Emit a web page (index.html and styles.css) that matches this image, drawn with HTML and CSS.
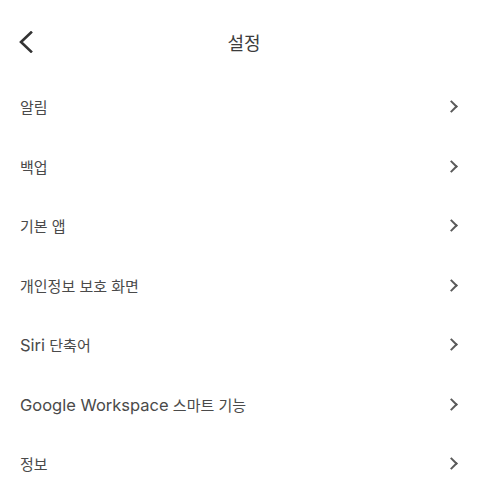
FILE: index.html
```html
<!DOCTYPE html>
<html lang="ko">
<head>
    <meta charset="UTF-8">
    <meta name="viewport" content="width=device-width, initial-scale=1.0">
    <title>설정</title>
    <link rel="stylesheet" href="styles.css">
</head>
<body>
    <div class="header">
        <button class="back" aria-label="뒤로">
            <svg width="16" height="22" viewBox="0 0 16 22">
                <path d="M13 1.5 L3 11 L13 20.5" fill="none" stroke="#333" stroke-width="2.6" stroke-linecap="square"/>
            </svg>
        </button>
        <h1>설정</h1>
    </div>
    <ul class="menu">
        <li class="menu-item"><span>알림</span><span class="chevron"></span></li>
        <li class="menu-item"><span>백업</span><span class="chevron"></span></li>
        <li class="menu-item"><span>기본 앱</span><span class="chevron"></span></li>
        <li class="menu-item"><span>개인정보 보호 화면</span><span class="chevron"></span></li>
        <li class="menu-item"><span><span class="latin">Siri</span> 단축어</span><span class="chevron"></span></li>
        <li class="menu-item"><span><span class="latin">Google Workspace</span> 스마트 기능</span><span class="chevron"></span></li>
        <li class="menu-item"><span>정보</span><span class="chevron"></span></li>
    </ul>
</body>
</html>
```

FILE: styles.css
```css
:root {
    --text-title: #3c3c3c;
    --text-row: #4a4a4a;
    --chevron: #5a5a5a;
}

body {
    margin: 0;
    background: #ffffff;
    font-family: Inter, "Noto Sans CJK KR", sans-serif;
    color: var(--text-row);
}

.header {
    position: relative;
    height: 70px;
    padding-top: 7px;
    display: flex;
    align-items: center;
    justify-content: center;
}

.back {
    position: absolute;
    left: 18px;
    top: 31px;
    padding: 0;
    border: 0;
    background: none;
    display: flex;
}

h1 {
    margin: 0;
    font-size: 18px;
    font-weight: 400;
    color: var(--text-title);
}

.menu {
    list-style: none;
    margin: 0;
    padding: 0;
}

.menu-item {
    height: 59.5px;
    padding: 0 32px 0 20px;
    display: flex;
    align-items: center;
    justify-content: space-between;
    font-size: 15px;
}

.latin {
    font-size: 16.5px;
}

.chevron {
    width: 7px;
    height: 7px;
    border-top: 2px solid var(--chevron);
    border-right: 2px solid var(--chevron);
    transform: rotate(45deg);
}
```
